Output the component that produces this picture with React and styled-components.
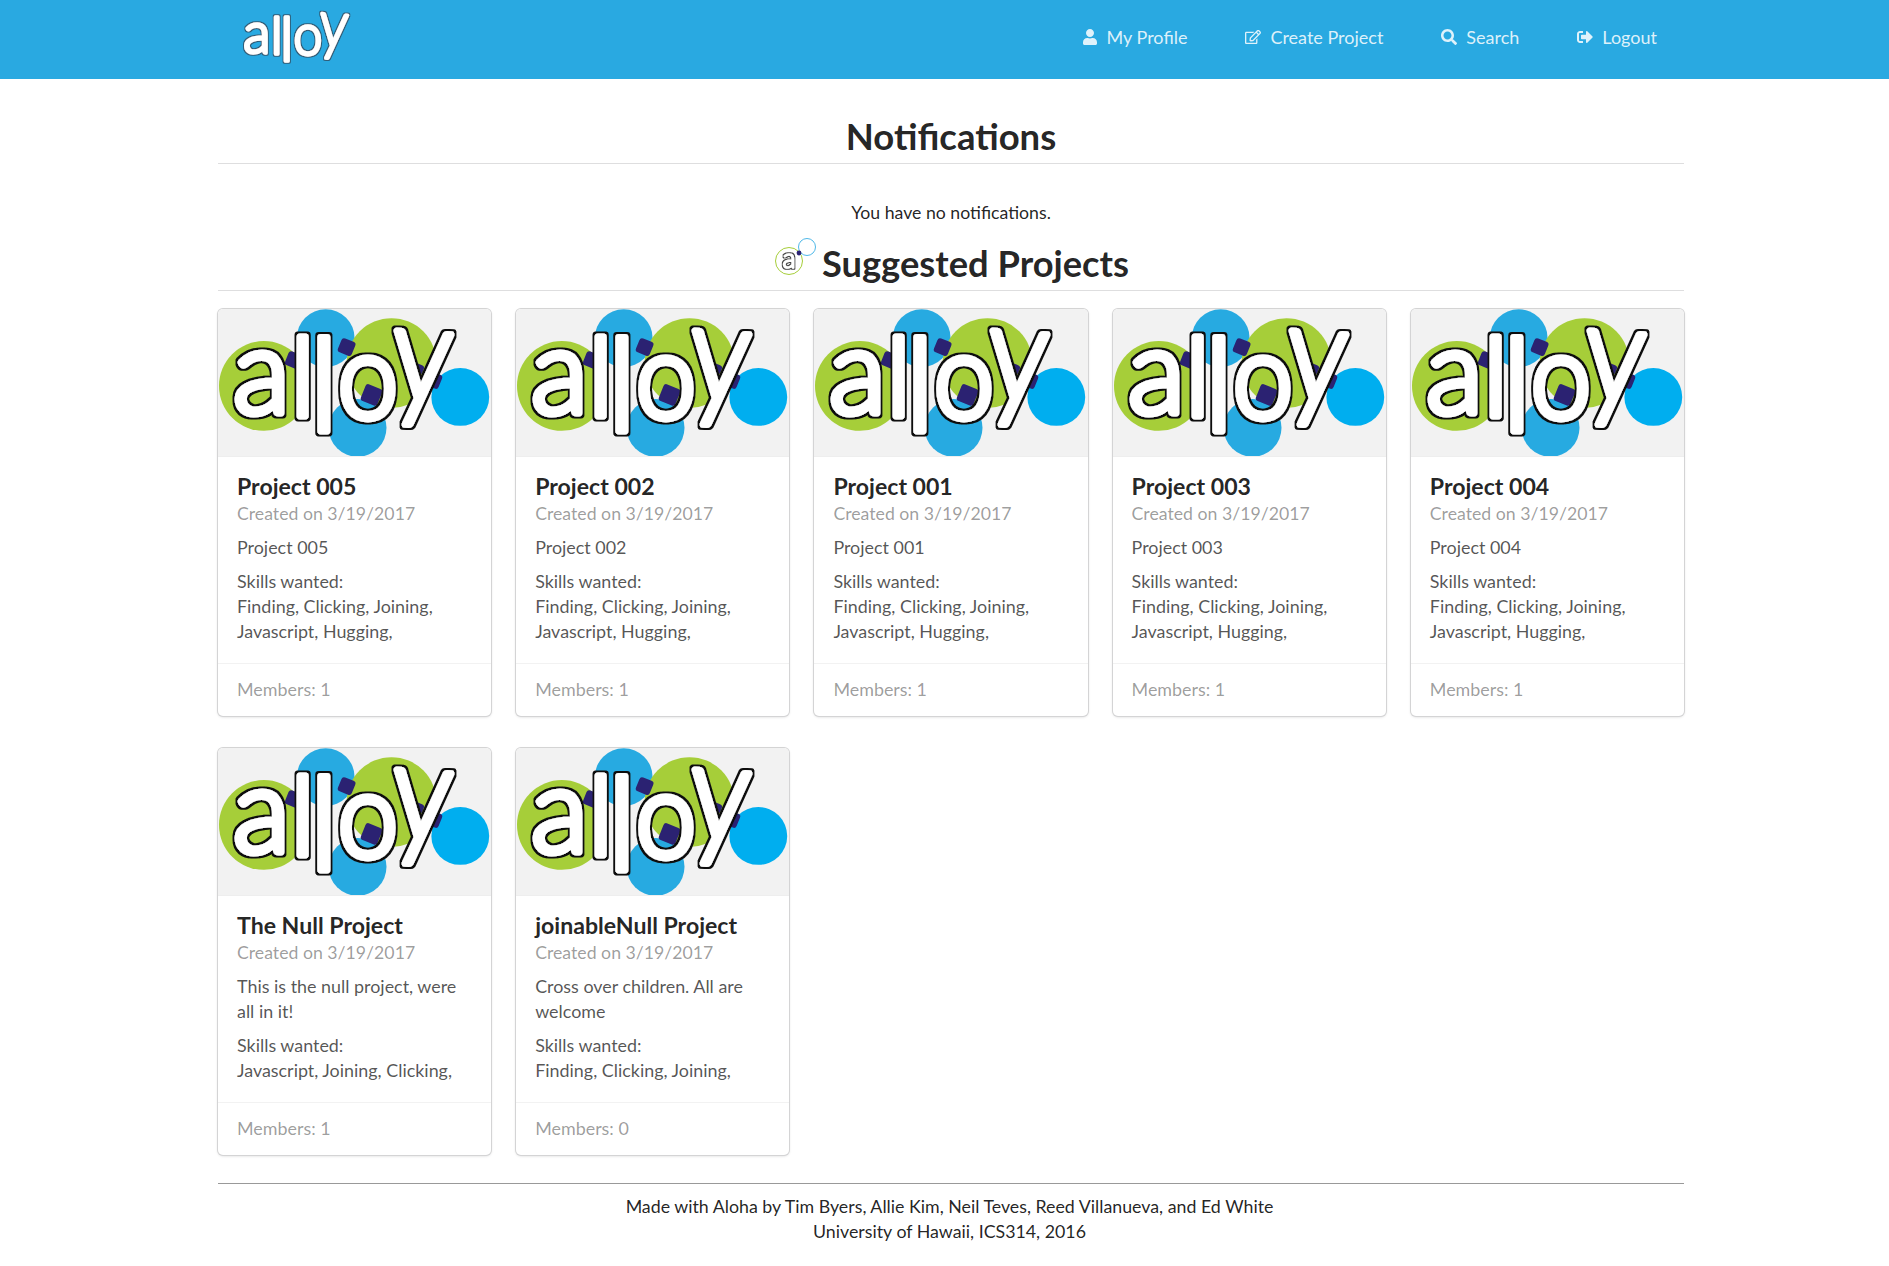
import React, { useId } from 'react';
import styled, { createGlobalStyle } from 'styled-components';
import { FaUser, FaRegEdit, FaSearch, FaSignOutAlt } from 'react-icons/fa';

const NAV_ITEMS = [
  { label: 'My Profile', icon: FaUser },
  { label: 'Create Project', icon: FaRegEdit },
  { label: 'Search', icon: FaSearch },
  { label: 'Logout', icon: FaSignOutAlt }
];

const FIVE_SKILLS = 'Finding, Clicking, Joining, Javascript, Hugging,';

const PROJECTS = [
  { name: 'Project 005', desc: 'Project 005', skills: FIVE_SKILLS, members: 1 },
  { name: 'Project 002', desc: 'Project 002', skills: FIVE_SKILLS, members: 1 },
  { name: 'Project 001', desc: 'Project 001', skills: FIVE_SKILLS, members: 1 },
  { name: 'Project 003', desc: 'Project 003', skills: FIVE_SKILLS, members: 1 },
  { name: 'Project 004', desc: 'Project 004', skills: FIVE_SKILLS, members: 1 },
  { name: 'The Null Project', desc: 'This is the null project, were all in it!', skills: 'Javascript, Joining, Clicking,', members: 1 },
  { name: 'joinableNull Project', desc: 'Cross over children. All are welcome', skills: 'Finding, Clicking, Joining,', members: 0 }
];

// letters of the wordmark, placed one by one because the logo is hand lettered
const LETTERS = [
  { ch: 'a', x: 15, y: 104, size: 118, sx: 1, rot: 0 },
  { ch: 'l', x: 73, y: 107, size: 108, sx: 1, rot: 0 },
  { ch: 'l', x: 92, y: 122, size: 128, sx: 1, rot: 0 },
  { ch: 'o', x: 120, y: 109, size: 118, sx: 0.92, rot: 0 },
  { ch: 'y', x: 172, y: 90, size: 138, sx: 0.86, rot: 4 }
];

// white letters with a dark edge grown around them
const Outlined = ({ outline, radius, width, children }) => {
  const id = useId();
  return (
    <>
      <filter id={id} x="-5%" y="-5%" width="110%" height="110%">
        <feMorphology in="SourceAlpha" operator="dilate" radius={radius} result="grown" />
        <feFlood floodColor={outline} />
        <feComposite in2="grown" operator="in" />
        <feMerge>
          <feMergeNode />
          <feMergeNode in="SourceGraphic" />
        </feMerge>
      </filter>
      <g filter={`url(#${id})`} fontFamily="Lato, sans-serif" fontWeight="300" fill="#fff" stroke="#fff" strokeWidth={width} strokeLinejoin="round">
        {children}
      </g>
    </>
  );
};

const Wordmark = ({ outline, radius = 1.8 }) => (
  <Outlined outline={outline} radius={radius} width={7}>
    {LETTERS.map((l, i) => (
      <text key={i} transform={`translate(${l.x} ${l.y}) rotate(${l.rot}) scale(${l.sx} 1)`} fontSize={l.size}>
        {l.ch}
      </text>
    ))}
  </Outlined>
);

const Blob = ({ x, y, s = 15 }) => (
  <rect x={x - s / 2} y={y - s / 2} width={s} height={s} rx="3" fill="#2b2272" transform={`rotate(22 ${x} ${y})`} />
);

const ProjectLogo = () => (
  <LogoSvg viewBox="0 0 274 147">
    <circle cx="46" cy="77" r="45" fill="#a6ce39" />
    <circle cx="108" cy="29" r="29" fill="#27aae1" />
    <circle cx="174" cy="54" r="45" fill="#a6ce39" />
    <circle cx="140" cy="119" r="29" fill="#27aae1" />
    <circle cx="243" cy="88" r="29" fill="#00aeef" />
    <Blob x={129} y={38} />
    <Blob x={154} y={86} s={18} />
    <Blob x={76} y={51} />
    <Blob x={216} y={71} />
    <Blob x={201} y={60} s={10} />
    <Wordmark outline="#111" />
  </LogoSvg>
);

const HeaderLogo = () => (
  <HeaderSvg viewBox="0 0 274 149">
    <Wordmark outline="#2f5d78" radius={2} />
  </HeaderSvg>
);

const SmallMark = () => (
  <SmallSvg viewBox="0 0 44 44">
    <circle cx="16" cy="27" r="13.5" fill="#fff" stroke="#a6ce39" strokeWidth="1" />
    <circle cx="34" cy="13" r="8.5" fill="#fff" stroke="#4fb8e8" strokeWidth="1" />
    <circle cx="26" cy="19" r="2.4" fill="#2b2272" />
    <Outlined outline="#444" radius={0.7} width={1.6}>
      <text x="16" y="34" textAnchor="middle" fontSize="27">a</text>
    </Outlined>
  </SmallSvg>
);

const ProjectCard = ({ project }) => (
  <Card>
    <CardImage><ProjectLogo /></CardImage>
    <CardContent>
      <CardTitle>{project.name}</CardTitle>
      <CardMeta>Created on 3/19/2017</CardMeta>
      <CardText>{project.desc}</CardText>
      <CardText>Skills wanted:<br />{project.skills}</CardText>
    </CardContent>
    <CardFooter>Members: {project.members}</CardFooter>
  </Card>
);

const App = () => (
  <>
    <GlobalStyle />
    <NavBar>
      <NavInner>
        <HeaderLogo />
        <NavMenu>
          {NAV_ITEMS.map(item => (
            <NavLink key={item.label}>
              <item.icon size={16} />
              {item.label}
            </NavLink>
          ))}
        </NavMenu>
      </NavInner>
    </NavBar>
    <Main>
      <PageTitle>Notifications</PageTitle>
      <Empty>You have no notifications.</Empty>
      <SectionTitle><SmallMark />Suggested Projects</SectionTitle>
      <CardGrid>
        {PROJECTS.map(p => <ProjectCard key={p.name} project={p} />)}
      </CardGrid>
      <Footer>
        Made with Aloha by Tim Byers, Allie Kim, Neil Teves, Reed Villanueva, and Ed White
        <br />
        University of Hawaii, ICS314, 2016
      </Footer>
    </Main>
  </>
);

const GlobalStyle = createGlobalStyle`
  html, body {
    margin: 0;
    padding: 0;
    background: #fff;
  }
  body {
    font-family: Lato, "Helvetica Neue", Arial, sans-serif;
    font-size: 17.9px;
    line-height: 25px;
    color: rgba(0, 0, 0, 0.87);
  }
`;

const NavBar = styled.header`
  height: 79px;
  background: #29a9e1;
`;

const NavInner = styled.div`
  width: 1466px;
  height: 100%;
  margin-left: 218px;
  display: flex;
  align-items: flex-start;
  justify-content: space-between;
`;

const HeaderSvg = styled.svg`
  width: 131px;
  height: 71px;
  margin: 3px 0 0 18px;
  overflow: visible;
`;

const NavMenu = styled.nav`
  display: flex;
  height: 74px;
  align-items: center;
  gap: 58px;
  padding-right: 27px;
`;

const NavLink = styled.a`
  display: flex;
  align-items: center;
  gap: 9px;
  color: rgba(255, 255, 255, 0.85);
  font-size: 18px;
`;

const Main = styled.main`
  width: 1466px;
  margin-left: 218px;
`;

const PageTitle = styled.h2`
  margin: 0;
  padding: 37px 0 5px;
  height: 85px;
  box-sizing: border-box;
  border-bottom: 1px solid rgba(34, 36, 38, 0.15);
  text-align: center;
  font-size: 36.5px;
  line-height: 40px;
  font-weight: 700;
`;

const Empty = styled.p`
  margin: 36px 0 0;
  text-align: center;
  font-size: 17.7px;
`;

const SectionTitle = styled.h2`
  margin: 13px 0 0;
  height: 53px;
  box-sizing: border-box;
  border-bottom: 1px solid rgba(34, 36, 38, 0.15);
  display: flex;
  justify-content: center;
  align-items: flex-start;
  gap: 5px;
  font-size: 36.3px;
  line-height: 50px;
  font-weight: 700;
`;

const SmallSvg = styled.svg`
  width: 44px;
  height: 44px;
  margin-top: -4px;
`;

const CardGrid = styled.div`
  display: grid;
  grid-template-columns: repeat(5, 1fr);
  gap: 32px 25px;
  margin-top: 18px;
`;

const Card = styled.article`
  height: 407px;
  display: flex;
  flex-direction: column;
  border-radius: 5px;
  background: #fff;
  overflow: hidden;
  box-shadow: 0 1px 3px 0 #d4d4d5, 0 0 0 1px #d4d4d5;
`;

const CardImage = styled.div`
  height: 148px;
  flex: none;
  box-sizing: border-box;
  background: #f2f2f2;
  border-bottom: 1px solid #eee;
`;

const LogoSvg = styled.svg`
  display: block;
  width: 100%;
  height: 147px;
`;

const CardContent = styled.div`
  flex: 1;
  padding: 17px 19px 0;
`;

const CardTitle = styled.div`
  font-size: 23.1px;
  line-height: 25px;
  font-weight: 700;
`;

const CardMeta = styled.div`
  color: rgba(0, 0, 0, 0.4);
  line-height: 25px;
  margin-top: 2px;
  font-size: 17.7px;
`;

const CardText = styled.div`
  color: rgba(0, 0, 0, 0.68);
  margin-top: 9px;
`;

const CardFooter = styled.div`
  height: 53px;
  flex: none;
  box-sizing: border-box;
  padding: 13px 19px;
  border-top: 1px solid rgba(34, 36, 38, 0.06);
  color: rgba(0, 0, 0, 0.4);
`;

const Footer = styled.footer`
  margin-top: 28px;
  padding: 10px 3px 9px 0;
  border-top: 1px solid #999;
  text-align: center;
  font-size: 17.8px;
`;

export default App;
